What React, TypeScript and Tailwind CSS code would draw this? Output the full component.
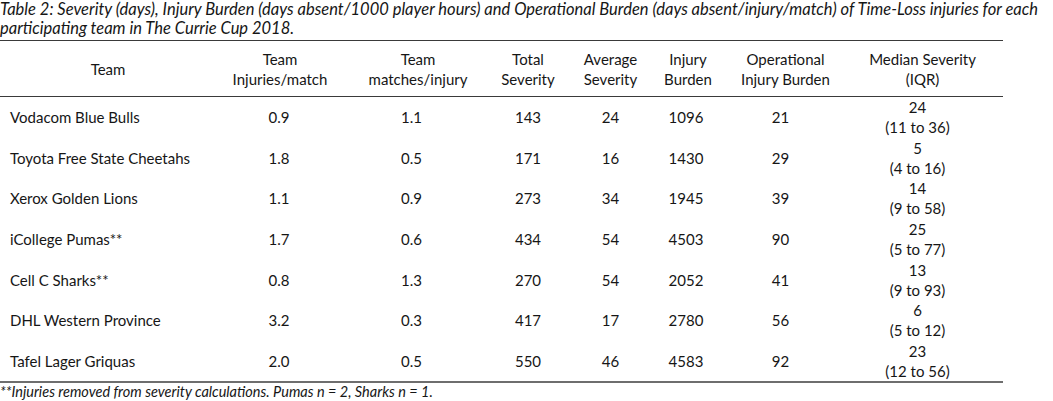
import React from "react";

const rows = [
  ["Vodacom Blue Bulls", "0.9", "1.1", "143", "24", "1096", "21", "24", "(11 to 36)"],
  ["Toyota Free State Cheetahs", "1.8", "0.5", "171", "16", "1430", "29", "5", "(4 to 16)"],
  ["Xerox Golden Lions", "1.1", "0.9", "273", "34", "1945", "39", "14", "(9 to 58)"],
  ["iCollege Pumas**", "1.7", "0.6", "434", "54", "4503", "90", "25", "(5 to 77)"],
  ["Cell C Sharks**", "0.8", "1.3", "270", "54", "2052", "41", "13", "(9 to 93)"],
  ["DHL Western Province", "3.2", "0.3", "417", "17", "2780", "56", "6", "(5 to 12)"],
  ["Tafel Lager Griquas", "2.0", "0.5", "550", "46", "4583", "92", "23", "(12 to 56)"],
];

const grid = "grid grid-cols-[210px_133px_137px_88px_85px_76px_113px_161px]";

export default function App() {
  return (
    <div
      className="w-[1053px] h-[401px] bg-white text-[#161616] overflow-hidden"
      style={{ fontFamily: "Lato, 'Open Sans', sans-serif" }}
    >
      <div className="italic text-[16.5px] leading-[19px] whitespace-nowrap">
        Table 2: Severity (days), Injury Burden (days absent/1000 player hours) and Operational Burden (days absent/injury/match) of Time-Loss injuries for each
        <br />
        participating team in The Currie Cup 2018.
      </div>
      <div className="w-[1003px] mt-[2px] border-t border-[#3a3a3a] text-[15px] leading-[20px]">
        <div className={`${grid} h-[56px] items-center text-center border-b border-[#3a3a3a]`}>
          <div className="pl-[6px]">Team</div>
          <div className="pl-[7px]">Team<br />Injuries/match</div>
          <div className="pl-[13px]">Team<br />matches/injury</div>
          <div className="pl-[8px]">Total<br />Severity</div>
          <div>Average<br />Severity</div>
          <div className="pr-[6px]">Injury<br />Burden</div>
          <div>Operational<br />Injury Burden</div>
          <div>Median Severity<br />(IQR)</div>
        </div>
        {rows.map((r) => (
          <div key={r[0]} className={`${grid} h-[40.57px] items-center text-center`}>
            <div className="text-left pl-[10px]">{r[0]}</div>
            <div className="pl-[5px]">{r[1]}</div>
            <div>{r[2]}</div>
            <div className="pl-[8px]">{r[3]}</div>
            <div>{r[4]}</div>
            <div className="pr-[10px]">{r[5]}</div>
            <div className="pr-[10px]">{r[6]}</div>
            <div className="pr-[10px]">{r[7]}<br />{r[8]}</div>
          </div>
        ))}
        <div className="border-t-2 border-[#6e6e6e]" />
      </div>
      <div className="italic text-[14.5px] leading-[17px]">
        **Injuries removed from severity calculations. Pumas n = 2, Sharks n = 1.
      </div>
    </div>
  );
}
